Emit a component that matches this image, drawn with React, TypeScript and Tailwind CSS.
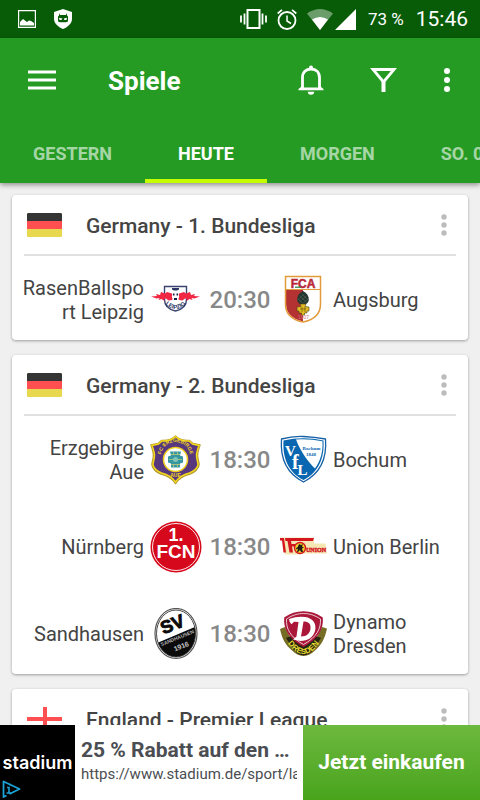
import React from "react";

interface Team {
  name: string;
  Logo: React.FC;
}

interface Match {
  home: Team;
  away: Team;
  time: string;
}

interface League {
  name: string;
  Flag: React.FC;
  matches: Match[];
}

const LeipzigLogo: React.FC = () => (
  <svg viewBox="0 0 52 52" className="h-13 w-13" aria-hidden="true">
    <path d="M14.5 12.5h22v13c0 6-4 10-11 11.500-7-1.500-11-5.500-11-11.500z" fill="#fff" stroke="#3b4470" strokeWidth="1.400" />
    <path d="M22 14h7v1.500l-2 1h-3l-2-1z" fill="#2c3563" />
    <path d="M1 22.500l6-.5-1-2 4 1 1-3 4 1.500 2-1.500 5 1.500 2 3.500-2 3-3.500.5-2.500-2-2 .5.500 2-3-2-3 1 1-2-3 .5z" fill="#f02844" />
    <path d="M50 22.500l-6-.5 1-2-4 1-1-3-4 1.500-2-1.500-5 1.500-2 3.500 2 3 3.500.5 2.500-2 2 .5-.5 2 3-2 3 1-1-2 3 .5z" fill="#f02844" />
    <circle cx="25.500" cy="22.500" r="3.600" fill="#fff" />
    <path d="M23 19.500h1.500v2H23zM26.500 19.500H28v2h-1.500zM24 24h3v2h-3z" fill="#1d2343" />
    <path id="leipzig-arc" d="M15.500 30.500q10 9 20 0" fill="none" />
    <text fontSize="6" fontWeight="700" fill="#26305f" fontFamily="Liberation Sans, sans-serif">
      <textPath href="#leipzig-arc" startOffset="50%" textAnchor="middle">LEIPZIG</textPath>
    </text>
  </svg>
);

const AugsburgLogo: React.FC = () => (
  <svg viewBox="0 0 52 52" className="h-13 w-13" aria-hidden="true">
    <path d="M7.500 2.500h35v27.500c0 10-7 16-17.500 18C14.500 46 7.500 40 7.500 30z" fill="#fff" />
    <path d="M8 16h17v31.500C15 45.500 8 39.500 8 30z" fill="#b53232" />
    <path d="M7.500 2.500h35v27.500c0 10-7 16-17.500 18C14.500 46 7.500 40 7.500 30z" fill="none" stroke="#e39a3b" strokeWidth="1.500" />
    <path d="M8 15.500h34" stroke="#e39a3b" />
    <text x="25" y="13.500" textAnchor="middle" fontSize="12" fontWeight="700" fill="#b8283a" stroke="#b8283a" strokeWidth=".5" fontFamily="Liberation Sans, sans-serif">FCA</text>
    <path d="M17 13.200h6" stroke="#2f8a4d" strokeWidth="1.300" />
    <path d="M25 17c4 2 6 5 5.800 9-.5 3-2.500 4.500-5.800 4.500s-5.300-1.500-5.800-4.500C19 22 21 19 25 17z" fill="#23372e" />
    <path d="M21.500 22l7 6M20 25l5 4.500M23.500 20l7 6M28.500 22l-7 6M30 25l-5 4.500M26.500 20l-7 6" stroke="#50635a" strokeWidth=".6" />
    <path d="M22 30h6l-1 2.500 4 .5v4h-2v2h-2.500v2h-3v-2H21v-2h-2v-4l4-.5z" fill="#e3bc20" stroke="#4b4218" strokeWidth=".6" />
    <path d="M22 35h6M24 33v5M27 33v5" stroke="#5a4c16" strokeWidth=".6" />
    <text x="25.500" y="44.500" textAnchor="middle" fontSize="5" fill="#d4717c" fontFamily="Liberation Sans, sans-serif">1907</text>
  </svg>
);

const AueLogo: React.FC = () => (
  <svg viewBox="0 0 52 52" className="h-13 w-13" aria-hidden="true">
    <path
      d="M25.500 2C29 5.500 34 7 39.500 6.500L43 9.500l7 1.500c-1.500 4-2.500 7-2.500 10.500 0 3.500 1.500 6 1.500 9.500-1.500 5.500-5 7.500-9 9-6 1.500-11 3.500-14.500 9.500C22 43.500 17 41.500 11 40c-4-1.500-7.500-3.500-9-9 0-3.500 1.500-6 1.500-9.500C3.500 18 2.500 15 1 11l7-1.500 3.500-3C17 7 22 5.500 25.500 2z"
      fill="#57377d"
      stroke="#b39a2c"
      strokeWidth="1.500"
      strokeLinejoin="round"
    />
    <path
      d="M25.500 2.500C29 6 34 7.500 39 7l3.500 3 6.500 1.500c-1.500 4-2.500 7-2.500 10 0 3.500 1.500 6 1.500 9.500-1.500 5-5 6.500-8.500 8-6 1.500-10.500 3.500-14 9-3.500-5.500-8-7.500-14-9-3.500-1.500-7-3-8.500-8 0-3.500 1.500-6 1.500-9.500 0-3-1-6-2.500-10L8.500 10 12 7C17 7.500 22 6 25.500 2.500z"
      fill="none"
      stroke="#f4d91c"
      strokeWidth="1.500"
    />
    <circle cx="25.500" cy="25.500" r="12" fill="#fff" stroke="#f0ce1d" strokeWidth="1.500" />
    <path d="M20 17.500h11l-1 4 3 1v6l-3 1v4h-9v-4l-3-1v-6l3-1z" fill="#3797a0" />
    <path d="M21 20.500h9M19 25.500h4M28 25.500h4M21 30.500h9M23.500 18v3M27.500 18v3M23.500 30v3M27.500 30v3" stroke="#bcc77a" strokeWidth=".8" />
    <circle cx="25.500" cy="25.500" r="2.500" fill="#7fc6b8" />
    <path id="aue-arc" d="M11 22.500a14.500 14.500 0 0 1 29 0" fill="none" />
    <text fontSize="5" fontWeight="700" fill="#f4d91c" fontFamily="Liberation Sans, sans-serif">
      <textPath href="#aue-arc" startOffset="50%" textAnchor="middle">FC ERZGEBIRGE</textPath>
    </text>
    <text x="25.500" y="43" textAnchor="middle" fontSize="5" fontWeight="700" fill="#f4d91c" fontFamily="Liberation Sans, sans-serif">AUE</text>
  </svg>
);

const BochumLogo: React.FC = () => (
  <svg viewBox="0 0 52 52" className="h-13 w-13" aria-hidden="true">
    <path d="M3.500 5q11-3 22-2.500T47.500 5C49 24 43 39 25.500 48 8 39 2 24 3.500 5z" fill="#fff" stroke="#1761a6" strokeWidth="1.300" />
    <path d="M5.500 6.500q10-2.300 20-2.200t20 2.200C46.500 24 41 38 25.500 46 10 38 4.500 24 5.500 6.500z" fill="#0867b0" />
    <path d="M18 5.500Q32 4.800 44.500 7.300C45 18 42.500 27 37 34.500 31 29 22 17 18 5.500z" fill="#fff" />
    <g fontFamily="Liberation Serif, serif" fontWeight="700">
      <text x="7" y="22" fontSize="15" fill="#fff">V</text>
      <text x="14" y="35" fontSize="20" fill="#fff">f</text>
      <text x="19.500" y="41" fontSize="15" fill="#fff">L</text>
      <text x="33.500" y="15.500" textAnchor="middle" fontSize="5" fill="#0867b0">Bochum</text>
      <text x="33" y="22" textAnchor="middle" fontSize="5" fill="#0867b0">1848</text>
    </g>
  </svg>
);

const NuernbergLogo: React.FC = () => (
  <svg viewBox="0 0 52 52" className="h-13 w-13" aria-hidden="true">
    <circle cx="26" cy="26" r="25.500" fill="#d6081b" />
    <circle cx="26" cy="26" r="23.500" fill="none" stroke="#fff" strokeWidth=".9" />
    <g fill="#fff" textAnchor="middle" fontFamily="Liberation Sans, sans-serif" fontWeight="700">
      <text x="26" y="19.500" fontSize="18">1.</text>
      <text x="26" y="37" fontSize="19">FCN</text>
    </g>
  </svg>
);

const UnionLogo: React.FC = () => (
  <svg viewBox="0 0 52 52" className="h-13 w-13" aria-hidden="true">
    <path d="M1.500 16.500H36v6h11.500l1.500 10H22v1H7L5 20z" fill="#f5e7b3" />
    <path d="M2 17h4l2 14.500H5.500L4 19.500H2z" fill="#d4171e" />
    <path d="M7 17h29l-1 3H13l.5 3h4v2.500H14l1 6h-3.500L9.500 20H7.500z" fill="#d4171e" />
    <circle cx="22" cy="27" r="5.500" fill="#efd42f" stroke="#d4171e" strokeWidth="1.400" />
    <path d="M21 23l2 1 2-1-1 2.500 2 1-2 1 1 3.500h-2l-1-2-2 2h-1l1-3.500-2 1v-1l2-2z" fill="#211c14" />
    <text x="28" y="30.500" fontSize="6" fontWeight="700" fill="#d4171e" stroke="#d4171e" strokeWidth=".4" fontFamily="Liberation Serif, serif">UNION</text>
  </svg>
);

const SandhausenLogo: React.FC = () => (
  <svg viewBox="0 0 52 52" className="h-13 w-13" aria-hidden="true">
    <clipPath id="sandhausen-oval">
      <ellipse cx="26" cy="25.500" rx="19.500" ry="23.500" />
    </clipPath>
    <ellipse cx="26" cy="25.500" rx="21" ry="25" fill="#fff" stroke="#565656" strokeWidth="1.200" />
    <g clipPath="url(#sandhausen-oval)">
      <path d="M0 38L52 16v36H0z" fill="#0b0b0b" />
    </g>
    <ellipse cx="26" cy="25.500" rx="19.500" ry="23.500" fill="none" stroke="#333" strokeWidth=".9" />
    <g textAnchor="middle" fontFamily="Liberation Sans, sans-serif" fontWeight="700" transform="rotate(-22 25.500 25.500)">
      <text x="26" y="22" fontSize="18" fill="#0b0b0b" stroke="#0b0b0b" strokeWidth=".9">SV</text>
      <text x="25.500" y="32" fontSize="5" fill="#b5b5b5">SANDHAUSEN</text>
      <text x="26" y="42" fontSize="7" fill="#c4c4c4">1916</text>
    </g>
  </svg>
);

const DresdenLogo: React.FC = () => (
  <svg viewBox="0 0 52 52" className="h-13 w-13" aria-hidden="true">
    <path d="M2 21l5-2 6 12 12.500 8L38 31l6-12 5 1.500c-2 10-6 17-12 22-3.500 3-7 5.500-11.500 5.500S17.500 45.500 14 42.500C8 37.500 4 31 2 21z" fill="#766d25" />
    <path d="M8 30l5-2 12.500 10L38 28l5 2-8 12c-5 7-14 7-19 0z" fill="#262413" />
    <path d="M7 10C13 5.500 19 4 25.500 4S38 5.500 44 10c1 11-4 20-18.500 28C11 30 6 21 7 10z" fill="#aa1739" stroke="#aa1739" strokeWidth="1.600" strokeLinejoin="round" />
    <path d="M8.500 11C14.500 7 20 5.500 25.500 5.500S36.500 7 42.500 11c.5 9.500-3.500 18-17 25.500C12 29 8 20.500 8.500 11z" fill="none" stroke="#f1dfe2" strokeWidth=".9" />
    <path
      d="M11 11Q19 8 27 9c8 1 12 7 10 14-2 6.500-7 10-14.500 10L15 31.500l3.500-3L20.500 14l-4.500-.3-2.500 2.500Q11 14 11 11zM25.500 13.500l-2.500 15c6 0 9-3.500 9.500-8 .5-4.500-2-7-7-7z"
      fill="#fff"
      fillRule="evenodd"
    />
    <path id="dresden-arc" d="M7 31Q25.500 61 44 31" fill="none" />
    <text fontSize="8" fontWeight="700" fill="#e6dd2f" fontFamily="Liberation Sans, sans-serif">
      <textPath href="#dresden-arc" startOffset="50%" textAnchor="middle">DRESDEN</textPath>
    </text>
  </svg>
);

const GermanyFlag: React.FC = () => (
  <svg viewBox="0 0 35 24" className="h-6 w-[35px]" aria-hidden="true">
    <rect width="35" height="24" rx="1" fill="#e8d84f" />
    <path d="M0 8h35v8H0z" fill="#ff4f50" />
    <path d="M1 0h33l1 1v7H0V1z" fill="#353535" />
  </svg>
);

const EnglandFlag: React.FC = () => (
  <svg viewBox="0 0 35 24" className="h-6 w-[35px]" aria-hidden="true">
    <path d="M0 0h35v24H0z" fill="#fff" />
    <path d="M16 0h4v10h15v4H20v10h-4V14H0v-4h16z" fill="#ff4f50" />
  </svg>
);

const leagues: League[] = [
  {
    name: "Germany - 1. Bundesliga",
    Flag: GermanyFlag,
    matches: [
      {
        home: { name: "RasenBallsport Leipzig", Logo: LeipzigLogo },
        away: { name: "Augsburg", Logo: AugsburgLogo },
        time: "20:30",
      },
    ],
  },
  {
    name: "Germany - 2. Bundesliga",
    Flag: GermanyFlag,
    matches: [
      {
        home: { name: "Erzgebirge Aue", Logo: AueLogo },
        away: { name: "Bochum", Logo: BochumLogo },
        time: "18:30",
      },
      {
        home: { name: "Nürnberg", Logo: NuernbergLogo },
        away: { name: "Union Berlin", Logo: UnionLogo },
        time: "18:30",
      },
      {
        home: { name: "Sandhausen", Logo: SandhausenLogo },
        away: { name: "Dynamo Dresden", Logo: DresdenLogo },
        time: "18:30",
      },
    ],
  },
  {
    name: "England - Premier League",
    Flag: EnglandFlag,
    matches: [],
  },
];

const tabs = ["GESTERN", "HEUTE", "MORGEN", "SO. 05"];

const StatusBar = () => (
  <div className="flex h-[38px] shrink-0 items-center justify-between bg-[#085c08] pr-3 pl-[18px] text-white">
    <div className="flex items-center gap-[18px]">
      <svg viewBox="0 0 18 18" className="h-[18px] w-[18px]" aria-hidden="true">
        <path d="M.6.6h16.800v16.800H.6z" fill="none" stroke="currentColor" strokeWidth="1.200" />
        <path d="M2 15.500V12l3-3 4 3 2-1.500 2 .5 3 2v2.500z" fill="currentColor" />
      </svg>
      <svg viewBox="0 0 18 20" className="h-5 w-[18px]" aria-hidden="true">
        <path d="M9 0l9 3v7c0 4-4 8-9 10-5-2-9-6-9-10V3z" fill="currentColor" />
        <path d="M5 4l1 2h6l1-2v2.500l1 1V11c0 1.500-.5 2.200-2 2.200H6c-1.500 0-2-.7-2-2.200V7.500l1-1z" fill="#085c08" />
        <path d="M5 8.800l3.300.7-.8 1.500H5.500zM13 8.800l-3.300.7.8 1.500h2z" fill="currentColor" />
      </svg>
    </div>
    <div className="flex items-center">
      <svg viewBox="0 0 27 20" className="h-5 w-[27px]" aria-hidden="true">
        <path d="M7.500 1h12v18h-12z" fill="none" stroke="currentColor" strokeWidth="2" />
        <path d="M1 6.500v7M4.500 4.500v11M26 6.500v7M22.500 4.500v11" stroke="currentColor" strokeWidth="1.800" />
      </svg>
      <svg viewBox="0 0 20 21" className="ml-2.5 h-[21px] w-5" aria-hidden="true">
        <circle cx="10" cy="11.500" r="8.500" fill="none" stroke="currentColor" strokeWidth="1.800" />
        <path d="M10 6.500v5.500l4 2.500" fill="none" stroke="currentColor" strokeWidth="1.500" />
        <path d="M.7 4.500L5 .9M19.300 4.500L15 .9" stroke="currentColor" strokeWidth="1.700" />
      </svg>
      <svg viewBox="0 0 26 21" className="ml-2.5 h-[21px] w-[26px]" aria-hidden="true">
        <path d="M0 4.500q13-9 26 0L13 21z" fill="currentColor" opacity=".4" />
        <path d="M5 10.500q8-5 16 0L13 21z" fill="currentColor" />
      </svg>
      <svg viewBox="0 0 21 21" className="ml-0.5 h-[21px] w-[21px]" aria-hidden="true">
        <path d="M21 0v21H0z" fill="currentColor" />
      </svg>
      <span className="ml-3 pt-0.5 text-[17px]">73 %</span>
      <span className="ml-3 pt-0.5 text-[21px]">15:46</span>
    </div>
  </div>
);

const Toolbar = () => (
  <div className="flex h-[84px] items-center pr-[9px] pl-4">
    <button aria-label="Menu" className="flex h-12 w-[52px] items-center justify-center">
      <svg viewBox="0 0 28 21" className="h-[21px] w-7" aria-hidden="true">
        <path d="M0 2h28M0 10h28M0 18h28" stroke="#fff" strokeOpacity=".5" strokeWidth="4" />
        <path d="M0 2h28M0 10h28M0 18h28" stroke="#fff" strokeWidth="2" />
      </svg>
    </button>
    <h1 className="ml-10 flex-1 pt-0.5 text-[26px] font-bold">Spiele</h1>
    <button aria-label="Notifications" className="flex h-12 w-12 items-center justify-center">
      <svg viewBox="0 0 26 30" className="h-[30px] w-[26px]" aria-hidden="true">
        <path d="M4.500 23.500V12.500C4.500 7 8 4 13 4s8.500 3 8.500 8.500v11" fill="none" stroke="#fff" strokeWidth="2.800" />
        <path d="M11 4V2.500a2 2 0 0 1 4 0V4zM0.500 25.200V24l4-3.200v1.700h17v-1.700l4 3.200v1.200z" fill="#fff" />
        <path d="M9.800 26.800h6.400a3.200 3 0 0 1-6.400 0z" fill="#fff" />
      </svg>
    </button>
    <button aria-label="Filter" className="ml-6 flex h-12 w-12 items-center justify-center">
      <svg viewBox="0 0 27 24" className="h-6 w-[27px]" aria-hidden="true">
        <path d="M3 1.500h21L13.500 14z" fill="none" stroke="#fff" strokeWidth="2.800" />
        <path d="M13.500 13v11" stroke="#fff" strokeWidth="4" />
      </svg>
    </button>
    <button aria-label="More options" className="ml-4 flex h-12 w-12 items-center justify-center">
      <svg viewBox="0 0 6 24" className="h-6 w-1.5" aria-hidden="true">
        <circle cx="3" cy="3" r="3" fill="#fff" />
        <circle cx="3" cy="12" r="3" fill="#fff" />
        <circle cx="3" cy="21" r="3" fill="#fff" />
      </svg>
    </button>
  </div>
);

const MatchRow: React.FC<{ match: Match }> = ({ match }) => {
  const { home, away, time } = match;

  return (
    <li className="grid h-13 grid-cols-[minmax(0,1fr)_58px_70px_58px_minmax(0,1fr)] items-center text-xl leading-6 text-[#444]">
      <span className="pr-[3px] text-right break-words">{home.name}</span>
      <span className="flex justify-center">
        <home.Logo />
      </span>
      <span className="text-center text-2xl font-medium text-[#888]">{time}</span>
      <span className="flex justify-center">
        <away.Logo />
      </span>
      <span className="break-words">{away.name}</span>
    </li>
  );
};

const LeagueCard: React.FC<{ league: League }> = ({ league }) => (
  <section className="rounded-sm bg-white px-2.5 shadow-[0_1px_3px_rgba(0,0,0,0.35)]">
    <div className="mx-0.5 flex h-[61px] items-center border-b-2 border-[#e0e0e0] pl-[3px]">
      <league.Flag />
      <h2 className="ml-6 flex-1 pt-1 text-[21px] font-medium text-[#444]">{league.name}</h2>
      <button aria-label={`Options for ${league.name}`} className="flex h-12 w-6 items-center justify-center">
        <svg viewBox="0 0 6 22" className="h-[22px] w-1.5" aria-hidden="true">
          <circle cx="3" cy="3" r="2.700" fill="#bcbcbc" />
          <circle cx="3" cy="11" r="2.700" fill="#bcbcbc" />
          <circle cx="3" cy="19" r="2.700" fill="#bcbcbc" />
        </svg>
      </button>
    </div>
    <ul className="flex flex-col gap-[35px] pt-[18px] pb-3.5">
      {league.matches.map((match) => (
        <MatchRow key={match.home.name} match={match} />
      ))}
    </ul>
  </section>
);

const AdBanner = () => (
  <aside className="flex h-[75px] shrink-0 bg-white">
    <div className="relative flex w-[75px] shrink-0 items-center justify-center bg-black">
      <span className="font-['Inter',sans-serif] text-lg font-semibold text-white">stadium</span>
      <svg viewBox="0 0 19 18" className="absolute bottom-0.5 left-0.5 h-[18px] w-[19px]" aria-hidden="true">
        <path d="M4.500 15.500l-3 1.500V1.500L17.500 9l-10 5" fill="none" stroke="#1ba3d6" strokeWidth="1.800" strokeLinejoin="round" />
        <path d="M5 7.500h2V13M4.500 13h5M7 4.500h1.500" fill="none" stroke="#1ba3d6" strokeWidth="1.600" />
      </svg>
    </div>
    <div className="flex min-w-0 flex-1 flex-col pt-[11px] pr-1.5 pl-1.5 text-[#4a4d52]">
      <p className="truncate text-[21px] leading-7 font-bold">25 % Rabatt auf den …</p>
      <p className="overflow-hidden text-[15px] leading-5 whitespace-nowrap">https://www.stadium.de/sport/laufen</p>
    </div>
    <button className="w-[177px] shrink-0 bg-linear-to-b from-[#6db83e] to-[#48a41b] text-[21px] font-bold text-white">
      Jetzt einkaufen
    </button>
  </aside>
);

const App: React.FC = () => {
  const [activeTab, setActiveTab] = React.useState("HEUTE");

  return (
    <div className="flex h-screen flex-col overflow-hidden bg-[#f0f0f0] font-['Roboto',sans-serif]">
      <StatusBar />
      <header className="z-10 shrink-0 bg-[#259b24] text-white shadow-[0_2px_5px_rgba(0,0,0,0.4)]">
        <Toolbar />
        <nav className="flex overflow-hidden">
          {tabs.map((tab) => (
            <button
              key={tab}
              onClick={() => setActiveTab(tab)}
              className={`h-[61px] shrink-0 border-b-4 px-[33px] pt-1.5 text-lg font-bold whitespace-nowrap ${
                tab === activeTab ? "border-[#c6ff00]" : "border-transparent text-white/60"
              }`}
            >
              {tab}
            </button>
          ))}
        </nav>
      </header>
      <main className="flex min-h-0 flex-1 flex-col gap-[15px] overflow-hidden px-3 pt-3">
        {leagues.map((league) => (
          <LeagueCard key={league.name} league={league} />
        ))}
      </main>
      <AdBanner />
    </div>
  );
};

export default App;
